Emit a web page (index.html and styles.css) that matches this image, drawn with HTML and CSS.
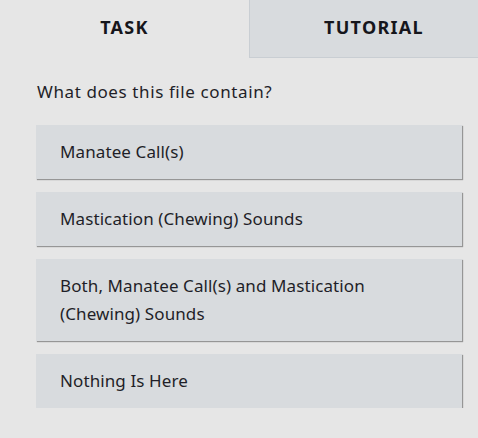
FILE: index.html
```html
<!DOCTYPE html>
<html>
<head>
<meta charset="utf-8">
<link rel="stylesheet" href="styles.css">
</head>
<body>
<div class="page">
  <div class="tabs">
    <div class="tab active">TASK</div>
    <div class="tab">TUTORIAL</div>
  </div>
  <div class="content">
    <p class="question">What does this file contain?</p>
    <div class="answers">
      <button class="answer">Manatee Call(s)</button>
      <button class="answer">Mastication (Chewing) Sounds</button>
      <button class="answer">Both, Manatee Call(s) and Mastication (Chewing) Sounds</button>
      <button class="answer">Nothing Is Here</button>
    </div>
  </div>
</div>
</body>
</html>
```
FILE: styles.css
```css
html, body {
  margin: 0;
  padding: 0;
  background: #e6e6e6;
  overflow: hidden;
}
.page {
  width: 498px;
  font-family: "Noto Sans", "Open Sans", sans-serif;
  color: #1f1f28;
}
.tabs {
  display: grid;
  grid-template-columns: 249px 249px;
  height: 58px;
}
.tab {
  display: flex;
  align-items: center;
  justify-content: center;
  padding-bottom: 4px;
  font-weight: 700;
  font-size: 18px;
  letter-spacing: 1.3px;
  color: #16161c;
  background: #d8dbde;
  border-left: 1px solid #c9ced3;
  border-bottom: 1px solid #c9ced3;
}
.tab.active {
  background: #e6e6e6;
  border: none;
}
.content {
  padding: 0 36px;
}
.question {
  margin: 22px 0 0 1px;
  font-size: 17px;
  letter-spacing: 0.6px;
  line-height: 24px;
  height: 45px;
}
.answers {
  display: flex;
  flex-direction: column;
  gap: 13px;
}
.answer {
  display: block;
  width: 426px;
  text-align: left;
  font-family: inherit;
  color: inherit;
  font-size: 17px;
  letter-spacing: 0.1px;
  line-height: 28px;
  padding: 13px 60px 13px 24px;
  background: #d8dbde;
  border: none;
  border-radius: 0;
  box-shadow: 1px 1px 1px rgba(0,0,0,0.35);
}
```
